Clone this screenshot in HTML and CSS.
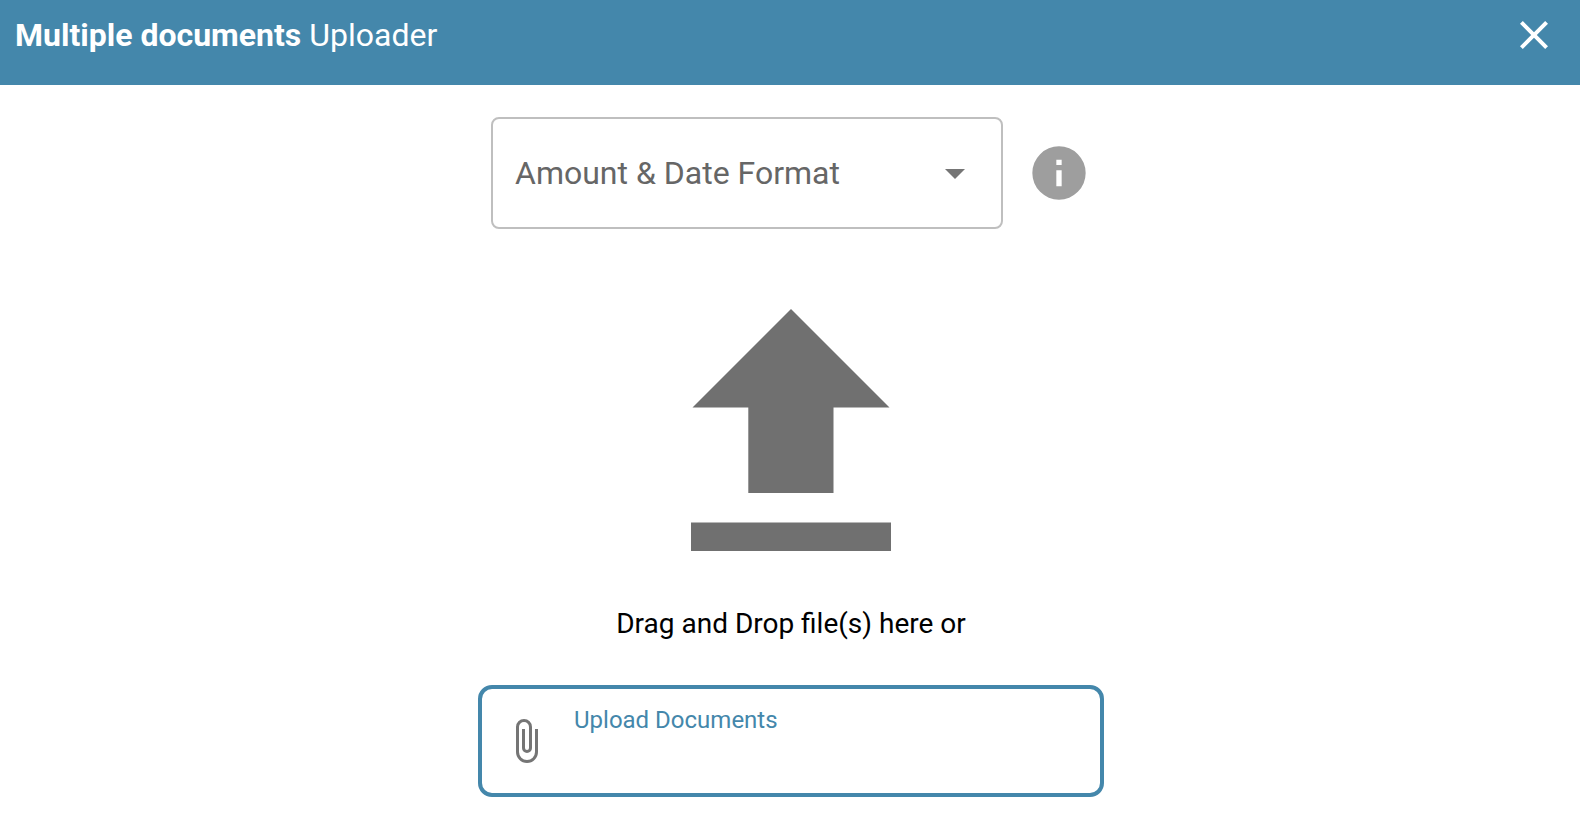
FILE: index.html
```html
<!DOCTYPE html>
<html lang="en">
<head>
<meta charset="utf-8">
<meta name="viewport" content="width=device-width, initial-scale=1">
<title>Multiple documents Uploader</title>
<link rel="stylesheet" href="styles.css">
</head>
<body>
<header class="header">
  <h1 class="title"><strong>Multiple documents</strong> Uploader</h1>
  <button class="close" type="button" aria-label="Close">
    <svg viewBox="0 0 24 24" aria-hidden="true"><path d="M19,6.41L17.59,5L12,10.59L6.41,5L5,6.41L10.59,12L5,17.59L6.41,19L12,13.41L17.59,19L19,17.59L13.41,12L19,6.41Z"/></svg>
  </button>
</header>
<main class="content">
  <div class="format">
    <div class="select">
      <select class="select-input" aria-label="Amount &amp; Date Format">
        <option>Amount &amp; Date Format</option>
      </select>
      <svg class="caret" viewBox="0 0 24 24" aria-hidden="true"><path d="M7,10L12,15L17,10H7Z"/></svg>
    </div>
    <button class="info" type="button" aria-label="Format information">
      <svg viewBox="0 0 24 24" aria-hidden="true"><path d="M13,9H11V7H13M13,17H11V11H13M12,2A10,10 0 0,0 2,12A10,10 0 0,0 12,22A10,10 0 0,0 22,12A10,10 0 0,0 12,2Z"/></svg>
    </button>
  </div>
  <svg class="arrow" viewBox="0 0 200 242" aria-hidden="true"><path d="M100,0L198.500,98.500H142.500V184H57.300V98.500H1.500ZM0,213.500H200V242H0Z"/></svg>
  <p class="hint">Drag and Drop file(s) here or</p>
  <div class="upload">
    <svg class="clip" viewBox="0 0 24 24" aria-hidden="true"><path d="M16.5,6V17.5A4,4 0 0,1 12.5,21.5A4,4 0 0,1 8.5,17.5V5A2.5,2.5 0 0,1 11,2.5A2.5,2.5 0 0,1 13.5,5V15.5A1,1 0 0,1 12.5,16.5A1,1 0 0,1 11.5,15.5V6H10V15.5A2.5,2.5 0 0,0 12.5,18A2.5,2.5 0 0,0 15,15.5V5A4,4 0 0,0 11,1A4,4 0 0,0 7,5V17.5A5.5,5.5 0 0,0 12.5,23A5.5,5.5 0 0,0 18,17.5V6H16.5Z"/></svg>
    <label class="upload-label" for="files">Upload Documents</label>
    <input class="upload-input" id="files" type="file" multiple>
  </div>
</main>
</body>
</html>
```
FILE: styles.css
```css
* {
  box-sizing: border-box;
}

body {
  margin: 0;
  background: #fff;
  color: #000;
  font-family: Roboto, "Liberation Sans", sans-serif;
}

svg {
  display: block;
  fill: currentColor;
}

button {
  padding: 0;
  border: 0;
  background: none;
  cursor: pointer;
}

.header {
  display: flex;
  justify-content: space-between;
  align-items: flex-start;
  padding: 11px 22px 26px 15px;
  background: #4487ab;
  color: #fff;
}

.title {
  margin: 0;
  font-size: 32px;
  line-height: 48px;
  font-weight: 400;
}

.title strong {
  font-weight: 700;
}

.close {
  color: #fff;
}

.close svg {
  width: 48px;
  height: 48px;
}

.content {
  display: flex;
  flex-direction: column;
  align-items: center;
  padding: 32px 0 24px 2px;
}

.format {
  display: flex;
  align-items: center;
  gap: 24px;
  width: 600px;
  max-width: 100%;
}

.select {
  position: relative;
  flex: 1;
}

.select-input {
  display: block;
  width: 100%;
  height: 112px;
  padding: 0 80px 0 22px;
  border: 2px solid #bfbfbf;
  border-radius: 8px;
  background: #fff;
  color: #666;
  font: 400 32px/40px Roboto, "Liberation Sans", sans-serif;
  appearance: none;
}

.caret {
  position: absolute;
  top: 32px;
  right: 24px;
  width: 48px;
  height: 48px;
  color: #757575;
  pointer-events: none;
}

.info {
  color: #9e9e9e;
}

.info svg {
  width: 64px;
  height: 64px;
}

.arrow {
  width: 200px;
  margin-top: 80px;
  color: #707070;
}

.hint {
  margin: 53px 0 41px;
  font-size: 28px;
  line-height: 40px;
}

.upload {
  position: relative;
  display: flex;
  align-items: flex-start;
  gap: 24px;
  width: 626px;
  max-width: 100%;
  height: 112px;
  padding: 16px 20px;
  border: 4px solid #4487ab;
  border-radius: 14px;
}

.clip {
  width: 48px;
  height: 48px;
  margin-top: 12px;
  color: #757575;
}

.upload-label {
  color: #4487ab;
  font-size: 24px;
  line-height: 30px;
}

.upload-input {
  position: absolute;
  inset: 0;
  width: 100%;
  opacity: 0;
  cursor: pointer;
}
```
